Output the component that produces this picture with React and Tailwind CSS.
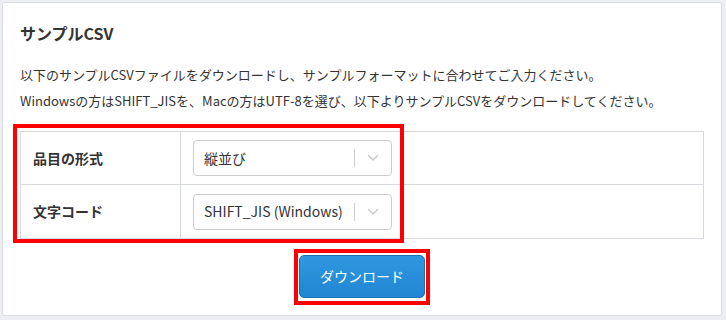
import { useState } from 'react';

const FONT = { fontFamily: '"Noto Sans CJK JP", "Noto Sans", sans-serif' };

/* ── Select box ──────────────────────────────────────── */
function SelectBox({ value }) {
  return (
    <div className="flex h-[36px] w-[199px] items-center rounded-[4px] border border-[#cccccc] bg-white pl-[10px]">
      <span className="flex-1 truncate text-[14px] text-[#333333]">{value}</span>
      <span className="h-[18px] w-px bg-[#cccccc]" />
      <span className="flex w-[36px] items-center justify-center">
        <svg width="12" height="8" viewBox="0 0 12 8" fill="none">
          <path d="M1.5 1.5 6 6l4.5-4.5" stroke="#cccccc" strokeWidth="1.6" strokeLinecap="round" strokeLinejoin="round" />
        </svg>
      </span>
    </div>
  );
}

/* ── Form row ────────────────────────────────────────── */
function Row({ label, value, last }) {
  return (
    <div className={`flex h-[53px] ${last ? '' : 'border-b border-[#d6d9dd]'}`}>
      <div className="flex w-[160px] items-center border-r border-[#d6d9dd] pl-[12px] text-[14px] font-bold text-[#333333]">
        {label}
      </div>
      <div className="flex flex-1 items-center pl-[12px]">
        <SelectBox value={value} />
      </div>
    </div>
  );
}

export default function App() {
  const [rows] = useState([
    { label: '品目の形式', value: '縦並び' },
    { label: '文字コード', value: 'SHIFT_JIS (Windows)' },
  ]);

  return (
    <div className="min-h-[320px] bg-[#eceef1] pl-[2px] pr-[4px] pt-[2px] pb-[4px]" style={FONT}>
      <div className="h-[314px] rounded-[3px] border border-[#d9dce1] bg-white pl-[17px] pr-[17px] pt-[19px]">
        <h2 className="text-[16px] leading-[22px] font-bold text-[#333333]">サンプルCSV</h2>
        <p className="mt-[18px] text-[13px] leading-[26px] text-[#333333]">
          以下のサンプルCSVファイルをダウンロードし、サンプルフォーマットに合わせてご入力ください。
        </p>
        <p className="text-[13px] leading-[26px] text-[#333333]">
          Windowsの方はSHIFT_JISを、Macの方はUTF-8を選び、以下よりサンプルCSVをダウンロードしてください。
        </p>

        <div className="relative mt-[17px] border border-[#d6d9dd]">
          {rows.map((r, i) => (
            <Row key={r.label} label={r.label} value={r.value} last={i === rows.length - 1} />
          ))}
          {/* annotation */}
          <div className="pointer-events-none absolute left-[-8px] top-[-8px] h-[119px] w-[391px] border-[4px] border-[#ff0000]" />
        </div>

        <div className="mt-[16px] flex justify-center">
          <div className="relative">
            <button className="h-[43px] w-[126px] rounded-[5px] border border-[#1c72b4] bg-gradient-to-b from-[#2f97e0] to-[#2186d2] text-[14px] text-white">
              ダウンロード
            </button>
            <div className="pointer-events-none absolute left-[-5px] top-[-6px] h-[56px] w-[136px] border-[4px] border-[#ff0000]" />
          </div>
        </div>
      </div>
    </div>
  );
}
